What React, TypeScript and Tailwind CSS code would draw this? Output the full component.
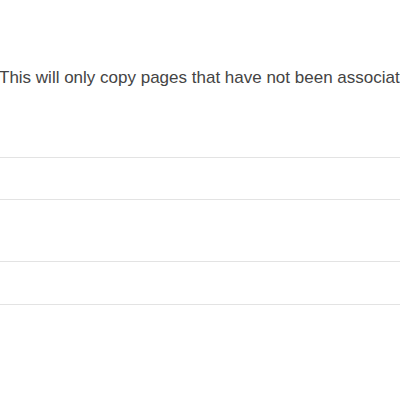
export default function App() {
  return (
    <div className="h-[400px] w-[400px] overflow-hidden bg-white font-['Liberation_Sans',Arial,sans-serif]">
      <p className="ml-[-1px] whitespace-nowrap pt-[66px] text-[17px] leading-[24px] text-[#444]">
        This will only copy pages that have not been associated with a translation yet.
      </p>
      <div className="mt-[67px] h-[43px] border-y border-[#e3e3e3]" />
      <div className="mt-[61px] h-[44px] border-y border-[#e3e3e3]" />
    </div>
  );
}
